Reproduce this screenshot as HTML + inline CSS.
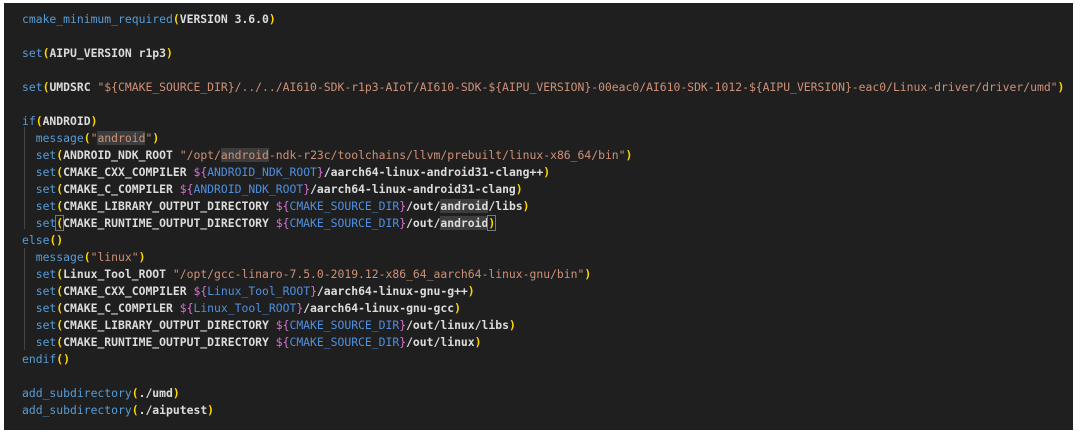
<!DOCTYPE html>
<html><head><meta charset="utf-8"><style>
html,body{margin:0;padding:0;background:#fff;width:1080px;height:434px;overflow:hidden}
#ed{position:absolute;left:4px;top:3px;width:1069px;height:427px;background:#1f1f1f;overflow:hidden}
pre{position:absolute;left:18px;top:8px;margin:0;font-family:"DejaVu Sans Mono","Liberation Mono",monospace;font-size:11.4px;line-height:17px;color:#dcdcdc;font-weight:bold}
.f{color:#569cd6;font-weight:normal}
.p{color:#ffd700}
.s{color:#ce9178;font-weight:normal}
.b{color:#da70d6;font-weight:normal}
.v{color:#4f8fe0;font-weight:normal}
.h{background:#3d3d3d}
.g{position:absolute;left:20px;width:1px;background:#444}
</style></head><body><div id="ed">
<div class="g" style="top:124px;height:102px"></div>
<div class="g" style="top:245px;height:102px"></div>
<pre><span class="f">cmake_minimum_required</span><span class="p">(</span>VERSION 3.6.0<span class="p">)</span>

<span class="f">set</span><span class="p">(</span>AIPU_VERSION r1p3<span class="p">)</span>

<span class="f">set</span><span class="p">(</span>UMDSRC <span class="s">"${CMAKE_SOURCE_DIR}/../../AI610-SDK-r1p3-AIoT/AI610-SDK-${AIPU_VERSION}-00eac0/AI610-SDK-1012-${AIPU_VERSION}-eac0/Linux-driver/driver/umd"</span><span class="p">)</span>

<span class="f">if</span><span class="p">(</span>ANDROID<span class="p">)</span>
  <span class="f">message</span><span class="p">(</span><span class="s">"<span class="h">android</span>"</span><span class="p">)</span>
  <span class="f">set</span><span class="p">(</span>ANDROID_NDK_ROOT <span class="s">"/opt/<span class="h">android</span>-ndk-r23c/toolchains/llvm/prebuilt/linux-x86_64/bin"</span><span class="p">)</span>
  <span class="f">set</span><span class="p">(</span>CMAKE_CXX_COMPILER <span class="b">${</span><span class="v">ANDROID_NDK_ROOT</span><span class="b">}</span>/aarch64-linux-android31-clang++<span class="p">)</span>
  <span class="f">set</span><span class="p">(</span>CMAKE_C_COMPILER <span class="b">${</span><span class="v">ANDROID_NDK_ROOT</span><span class="b">}</span>/aarch64-linux-android31-clang<span class="p">)</span>
  <span class="f">set</span><span class="p">(</span>CMAKE_LIBRARY_OUTPUT_DIRECTORY <span class="b">${</span><span class="v">CMAKE_SOURCE_DIR</span><span class="b">}</span>/out/<span class="h">android</span>/libs<span class="p">)</span>
  <span class="f">set</span><span class="p" style="outline:1px solid #777">(</span>CMAKE_RUNTIME_OUTPUT_DIRECTORY <span class="b">${</span><span class="v">CMAKE_SOURCE_DIR</span><span class="b">}</span>/out/<span class="h">android</span><span class="p" style="outline:1px solid #777">)</span>
<span class="f">else</span><span class="p">()</span>
  <span class="f">message</span><span class="p">(</span><span class="s">"linux"</span><span class="p">)</span>
  <span class="f">set</span><span class="p">(</span>Linux_Tool_ROOT <span class="s">"/opt/gcc-linaro-7.5.0-2019.12-x86_64_aarch64-linux-gnu/bin"</span><span class="p">)</span>
  <span class="f">set</span><span class="p">(</span>CMAKE_CXX_COMPILER <span class="b">${</span><span class="v">Linux_Tool_ROOT</span><span class="b">}</span>/aarch64-linux-gnu-g++<span class="p">)</span>
  <span class="f">set</span><span class="p">(</span>CMAKE_C_COMPILER <span class="b">${</span><span class="v">Linux_Tool_ROOT</span><span class="b">}</span>/aarch64-linux-gnu-gcc<span class="p">)</span>
  <span class="f">set</span><span class="p">(</span>CMAKE_LIBRARY_OUTPUT_DIRECTORY <span class="b">${</span><span class="v">CMAKE_SOURCE_DIR</span><span class="b">}</span>/out/linux/libs<span class="p">)</span>
  <span class="f">set</span><span class="p">(</span>CMAKE_RUNTIME_OUTPUT_DIRECTORY <span class="b">${</span><span class="v">CMAKE_SOURCE_DIR</span><span class="b">}</span>/out/linux<span class="p">)</span>
<span class="f">endif</span><span class="p">()</span>

<span class="f">add_subdirectory</span><span class="p">(</span>./umd<span class="p">)</span>
<span class="f">add_subdirectory</span><span class="p">(</span>./aiputest<span class="p">)</span></pre>
</div></body></html>
